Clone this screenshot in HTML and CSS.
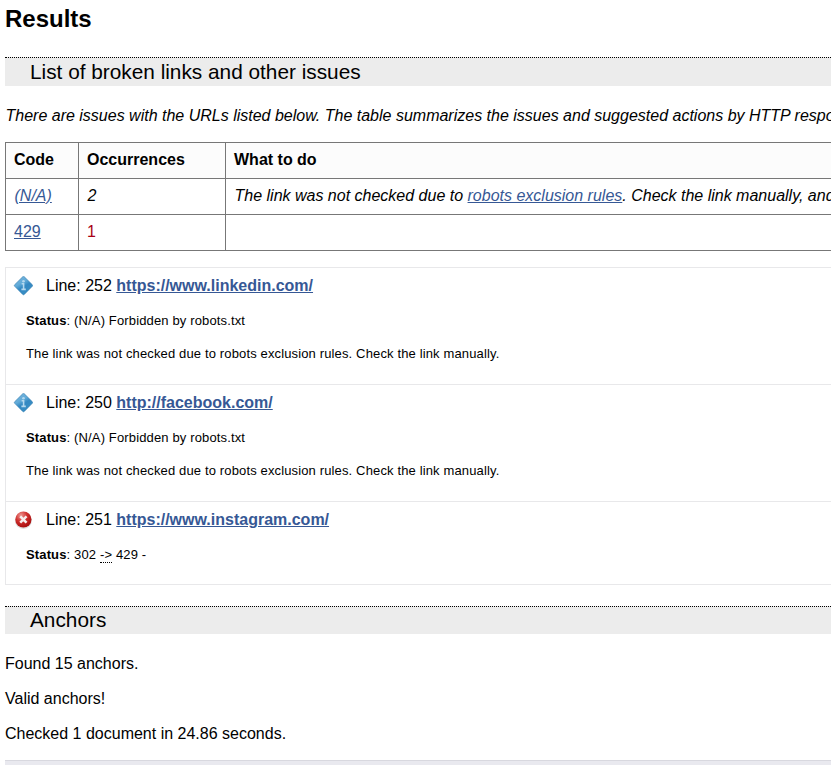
FILE: index.html
```html
<!DOCTYPE html>
<html lang="en">
<head>
<meta charset="utf-8">
<title>Link Checker Results</title>
<link rel="stylesheet" href="styles.css">
</head>
<body>
<svg class="defs" width="0" height="0" aria-hidden="true">
  <defs>
    <linearGradient id="blue" x1="0.2" y1="0" x2="0.8" y2="1">
      <stop offset="0.1" stop-color="#6fb0da"/>
      <stop offset="0.35" stop-color="#62abd8"/>
      <stop offset="0.55" stop-color="#3388c2"/>
      <stop offset="0.9" stop-color="#3a8fc4"/>
    </linearGradient>
    <radialGradient id="red" cx="0.35" cy="0.25" r="0.75">
      <stop offset="0" stop-color="#ee9590"/>
      <stop offset="0.5" stop-color="#cf2f2d"/>
      <stop offset="1" stop-color="#a90f10"/>
    </radialGradient>
    <symbol id="info" viewBox="0 0 20 20">
      <path d="M9.7 .8Q10.5 0 11.3 .8L19.3 8.7Q20.1 9.5 19.3 10.3L11.3 18.4Q10.5 19.2 9.7 18.4L1.7 10.3Q.9 9.5 1.7 8.7Z" fill="url(#blue)" stroke="#2f7aae" stroke-width=".6"/>
      <path d="M8.6 7.8H10.6V13M8.4 13.4H12.8" fill="none" stroke="#b4d8ee" stroke-width="1.6"/>
      <circle cx="10.5" cy="5.2" r="1.3" fill="#b4d8ee"/>
    </symbol>
    <symbol id="error" viewBox="0 0 20 20">
      <ellipse cx="10.4" cy="10.6" rx="8.5" ry="8.3" fill="#ddd"/>
      <circle cx="10.4" cy="9.5" r="8.1" fill="url(#red)"/>
      <path d="M8.1 7.2L12.7 11.8M12.7 7.2L8.1 11.8" stroke="#f7eeee" stroke-width="2.5" stroke-linecap="square"/>
    </symbol>
  </defs>
</svg>
<main>
  <h2>Results</h2>
  <h3>List of broken links and other issues</h3>
  <p class="summary"><i>There are issues with the URLs listed below. The table summarizes the issues and suggested actions by HTTP response status code.</i></p>
  <table>
    <thead>
      <tr><th>Code</th><th>Occurrences</th><th>What to do</th></tr>
    </thead>
    <tbody>
      <tr class="excluded"><td><a href="#na">(N/A)</a></td><td>2</td><td>The link was not checked due to <a href="#robots">robots exclusion rules</a>. Check the link manually, and see also the documentation.</td></tr>
      <tr class="broken"><td><a href="#c429">429</a></td><td>1</td><td></td></tr>
    </tbody>
  </table>
  <dl class="report">
    <div class="item" id="na">
      <dt><svg class="icon"><use href="#info"/></svg><span>Line: 252 <a href="#l252">https://www.linkedin.com/</a></span></dt>
      <dd><b>Status</b>: (N/A) Forbidden by robots.txt</dd>
      <dd>The link was not checked due to robots exclusion rules. Check the link manually.</dd>
    </div>
    <div class="item">
      <dt><svg class="icon"><use href="#info"/></svg><span>Line: 250 <a href="#l250">http://facebook.com/</a></span></dt>
      <dd><b>Status</b>: (N/A) Forbidden by robots.txt</dd>
      <dd>The link was not checked due to robots exclusion rules. Check the link manually.</dd>
    </div>
    <div class="item" id="c429">
      <dt><svg class="icon"><use href="#error"/></svg><span>Line: 251 <a href="#l251">https://www.instagram.com/</a></span></dt>
      <dd><b>Status</b>: 302 <span class="redirect">-&gt;</span> 429 -</dd>
    </div>
  </dl>
  <h3 class="anchors">Anchors</h3>
  <p>Found 15 anchors.</p>
  <p>Valid anchors!</p>
  <p class="total">Checked 1 document in 24.86 seconds.</p>
</main>
<footer></footer>
</body>
</html>
```
FILE: styles.css
```css
html { overflow: hidden; }
body {
  margin: 0;
  padding-left: 5px;
  height: 765px;
  overflow: hidden;
  background: #fff;
  color: #000;
  font: 16px/19px "Liberation Sans", Helvetica, sans-serif;
}
.defs { display: block; }
a { color: #365895; }
h2 { margin: 0; padding-top: 5px; font-size: 24px; line-height: 28px; }
h3 {
  margin: 24px 0 20px;
  padding-left: 25px;
  border-top: 1px dotted #000;
  background: #ececec;
  font-size: 20.8px;
  font-weight: 400;
  line-height: 28px;
}
p { margin: 0 0 16px; }
.summary { margin-bottom: 17px; padding-left: 0.5px; white-space: nowrap; }
table { width: 1100px; table-layout: fixed; border-collapse: collapse; }
th, td {
  box-sizing: border-box;
  height: 36px;
  padding: 0 8px 2px;
  border: 1px solid #777;
  text-align: left;
  white-space: nowrap;
}
th { background: #fcfcfc; }
th:nth-child(1) { width: 73px; }
th:nth-child(2) { width: 147px; }
.excluded { font-style: italic; }
.excluded td { padding-left: 8.5px; }
.broken td:nth-child(2) { color: #a80014; }
.report { margin: 16px 0 0; border: 1px solid #e8e8ea; border-right: 0; }
.item { height: 116px; }
.item + .item { border-top: 1px solid #e8e8ea; }
.item:last-child { height: 82px; }
dt { display: flex; align-items: center; padding: 8px 0 0 7px; line-height: 20px; }
dt a { font-weight: 700; }
.icon { width: 20px; height: 20px; margin-right: 13px; overflow: visible; }
dd { margin: 17px 0 0 20px; font-size: 13px; line-height: 16px; letter-spacing: 0.14px; }
.redirect { border-bottom: 1px dotted #000; }
h3.anchors { margin-top: 21px; padding-bottom: 1px; line-height: 26px; }
.total { margin-bottom: 17px; }
footer { height: 20px; border-top: 1px solid #d8d8df; background: #e9e9ef; }
```
